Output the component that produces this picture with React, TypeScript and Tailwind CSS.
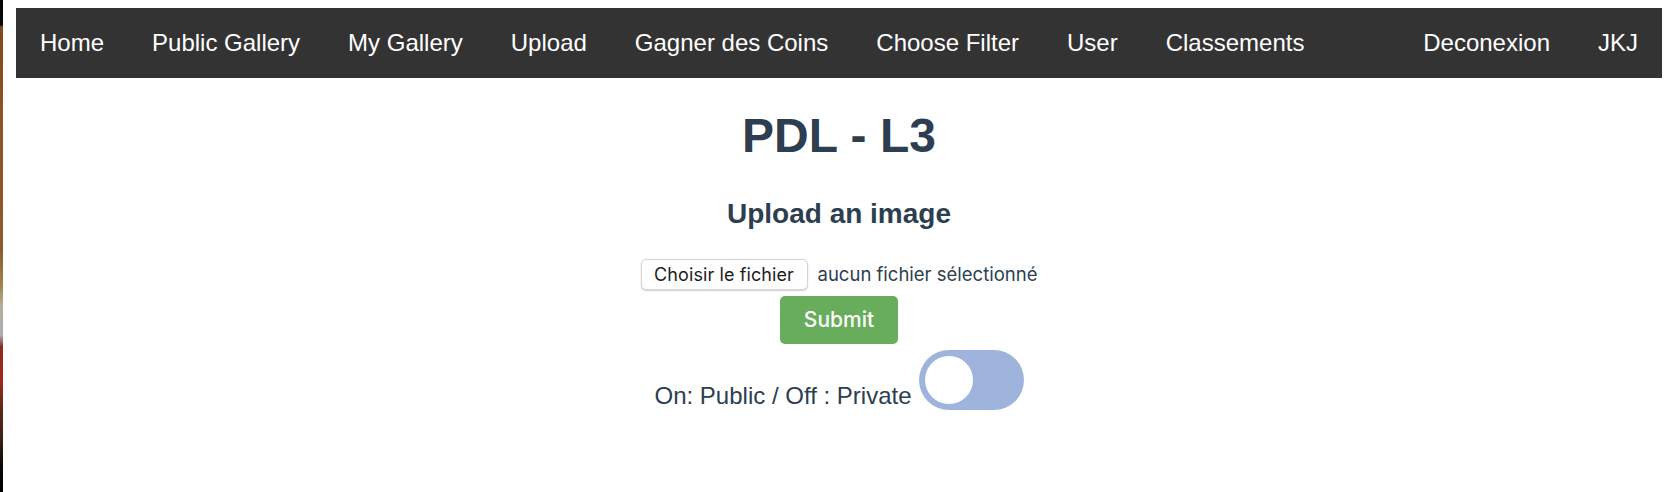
import React from "react";

const navLeft = ["Home", "Public Gallery", "My Gallery", "Upload", "Gagner des Coins", "Choose Filter", "User", "Classements"];
const navRight = ["Deconexion", "JKJ"];

export default function App() {
  return (
    <div className="flex w-[1670px] h-[492px] bg-white overflow-hidden">
      <div className="w-[3px] h-full shrink-0 bg-[linear-gradient(to_bottom,#050505_0px,#0a0a0a_25px,#7e4a1f_27px,#8a5527_120px,#8d5a2a_250px,#a08350_285px,#b5ad95_305px,#a9b0b5_335px,#8d2a1c_347px,#a3281b_380px,#5a2a15_410px,#3a2010_440px,#0a0a0a_465px,#000_492px)]" />
      <div className="flex-1 pl-[13px] pr-[8px] pt-[8px] font-['Liberation_Sans',Arial,sans-serif] text-[#2c3e50]">
        <nav className="flex items-center h-[70px] bg-[#333333]">
          {navLeft.map((t) => (
            <a key={t} className="px-6 text-[24px] leading-[24px] text-white whitespace-nowrap">
              {t}
            </a>
          ))}
          <div className="flex-1" />
          {navRight.map((t) => (
            <a key={t} className="px-6 text-[24px] leading-[24px] text-white whitespace-nowrap">
              {t}
            </a>
          ))}
        </nav>
        <div className="flex flex-col items-center">
          <h1 className="mt-[34px] text-[48px] leading-[48px] font-bold">PDL - L3</h1>
          <h3 className="mt-[40px] text-[28px] leading-[28px] font-bold">Upload an image</h3>
          <div className="mt-[31px] flex items-center h-[31px] font-['Inter',sans-serif]">
            <div className="h-[31px] w-[167px] flex items-center justify-center rounded-[5px] border border-[#d4d4d4] bg-white shadow-[0_1px_1.5px_rgba(0,0,0,0.18)] text-[18px] tracking-[0.1px] text-[#1c1c1c]">
              Choisir le fichier
            </div>
            <span className="ml-[10px] text-[18.5px] text-[#2c3e50]">aucun fichier sélectionné</span>
          </div>
          <button className="mt-[6px] w-[118px] h-[48px] rounded-[5px] bg-[#67ad5b] text-white text-[21px] font-medium font-['Inter',sans-serif]">
            Submit
          </button>
          <div className="mt-[6px] flex items-baseline">
            <span className="text-[24px] leading-[24px]">On: Public / Off : Private</span>
            <span className="ml-[7px] w-[105px] h-[60px] rounded-full bg-[#9fb4dc] p-[6px] flex items-center">
              <span className="block w-[48px] h-[48px] rounded-full bg-white" />
            </span>
          </div>
        </div>
      </div>
    </div>
  );
}
